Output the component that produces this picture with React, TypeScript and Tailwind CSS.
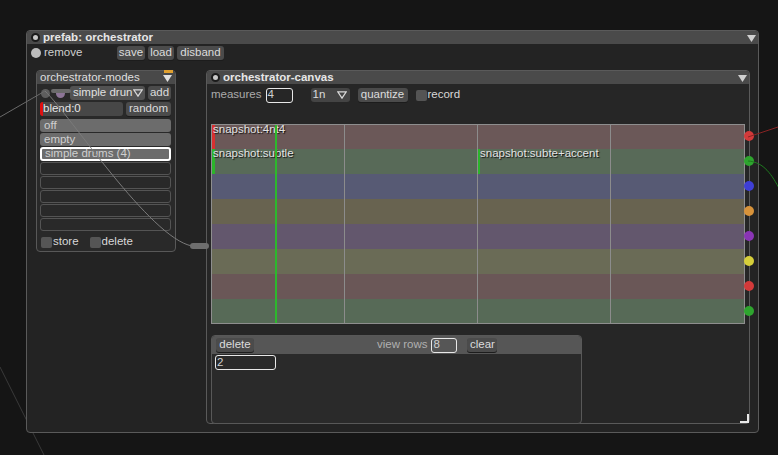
import React from "react";

const font = "font-['Liberation_Sans',Arial,sans-serif]";

function Btn({ label, className = "" }: { label: string; className?: string }) {
  return (
    <div
      className={`h-[14px] flex items-center justify-center rounded-[3px] bg-[#4b4b4b] text-[#dcdcdc] text-[11.5px] leading-none shadow-[0_1px_0_#1c1c1c] ${className}`}
    >
      {label}
    </div>
  );
}

function Tri({ fill = "#d0d0d0" }: { fill?: string }) {
  return (
    <svg width="9" height="7" viewBox="0 0 9 7">
      <polygon points="0,0 9,0 4.5,7" fill={fill} />
    </svg>
  );
}

function OpenTri() {
  return (
    <svg width="10" height="8" viewBox="0 0 10 8">
      <polygon points="0.8,0.8 9.2,0.8 5,7.2" fill="none" stroke="#d8d8d8" strokeWidth="1.2" />
    </svg>
  );
}

function Knob() {
  return <div className="w-[9px] h-[9px] rounded-full bg-[#c8c8c8] border-2 border-[#1b1b1b] shrink-0" />;
}

const rows = [
  { h: "h-[24px]", bg: "bg-[#6b5858]" },
  { h: "h-[25px]", bg: "bg-[#586a58]" },
  { h: "h-[25px]", bg: "bg-[#575a74]" },
  { h: "h-[25px]", bg: "bg-[#686350]" },
  { h: "h-[25px]", bg: "bg-[#63576d]" },
  { h: "h-[25px]", bg: "bg-[#6a6b56]" },
  { h: "h-[25px]", bg: "bg-[#6a5757]" },
  { h: "h-[24px]", bg: "bg-[#576a57]" },
];

const dots = ["bg-[#d23a3a]", "bg-[#2ea52e]", "bg-[#3f3fd6]", "bg-[#d8933a]", "bg-[#8a35b5]", "bg-[#d6cf3a]", "bg-[#d23a3a]", "bg-[#2ea52e]"];

const label = "absolute top-[-1px] text-[11.5px] leading-none text-[#e4e4e4] whitespace-nowrap [text-shadow:1px_1px_1px_#111]";

export default function App() {
  return (
    <div className={`relative w-[778px] h-[455px] overflow-hidden bg-[#151515] pt-[30px] pl-[26px] ${font}`}>
      {/* wire behind the prefab */}
      <svg className="absolute inset-0 pointer-events-none" width="778" height="455">
        <line x1="0" y1="367" x2="44" y2="455" stroke="#3a3a3a" strokeWidth="1" />
      </svg>

      <div className="relative w-[733px] h-[403px] rounded-[4px] border border-[#5a5a5a] bg-[#232323] flex flex-col">
        {/* prefab header */}
        <div className="h-[13px] bg-[#4a4a4a] rounded-t-[3px] flex items-center pl-[4px] pr-[2px] shrink-0">
          <Knob />
          <span className="ml-[3px] text-[11.5px] font-bold text-[#e6e6e6] leading-none">prefab: orchestrator</span>
          <div className="ml-auto mt-[1px]">
            <Tri />
          </div>
        </div>

        {/* remove row */}
        <div className="mt-[2px] h-[14px] flex items-center pl-[4px]">
          <div className="w-[10px] h-[10px] rounded-full bg-[#bdbdbd]" />
          <span className="ml-[3px] w-[73px] text-[11.5px] text-[#cfcfcf] leading-none">remove</span>
          <Btn label="save" className="w-[28px]" />
          <Btn label="load" className="ml-[3px] w-[26px]" />
          <Btn label="disband" className="ml-[3px] w-[47px]" />
        </div>

        <div className="mt-[10px] flex items-start pl-[9px]">
          {/* orchestrator-modes */}
          <div className="w-[140px] h-[182px] rounded-[4px] border border-[#585858] bg-[#292929] flex flex-col">
            <div className="relative h-[13px] bg-[#494949] rounded-t-[3px] flex items-center pl-[3px] pr-[3px] shrink-0">
              <span className="text-[11.5px] text-[#dedede] leading-none">orchestrator-modes</span>
              <div className="ml-auto mt-[2px]">
                <Tri fill="#e0e0e0" />
              </div>
              <div className="absolute right-[2px] top-[-1px] w-[9px] h-[3px] bg-[#e0a030]" />
            </div>
            <div className="mt-[2px] h-[14px] flex items-center pl-[4px]">
              <div className="w-[9px] h-[9px] rounded-full bg-[#5e5e5e]" />
              <div className="ml-[6px] w-[9px] h-[9px] rounded-full bg-[#8d7597]" />
              <div className="ml-[5px] w-[75px] h-[14px] rounded-[3px] bg-[#525252] flex items-center pl-[3px] pr-[2px] justify-between">
                <span className="text-[11.5px] text-[#e0e0e0] leading-none whitespace-nowrap">simple drun</span>
                <OpenTri />
              </div>
              <Btn label="add" className="ml-[3px] w-[23px]" />
            </div>
            <div className="mt-[2px] h-[14px] flex items-center pl-[3px]">
              <div className="w-[83px] h-[14px] rounded-[3px] bg-[#474747] flex items-center overflow-hidden">
                <div className="w-[3px] h-[14px] bg-[#e01010]" />
                <span className="text-[11.5px] text-[#e6e6e6] leading-none">blend:0</span>
              </div>
              <Btn label="random" className="ml-[3px] w-[45px]" />
            </div>
            <div className="mt-[3px] ml-[3px] w-[131px] flex flex-col gap-[1px]">
              <div className="h-[13px] rounded-[3px] bg-[#6c6c6c] flex items-center pl-[4px] text-[11.5px] text-[#cfcfcf] leading-none">off</div>
              <div className="h-[13px] rounded-[3px] bg-[#6c6c6c] flex items-center pl-[4px] text-[11.5px] text-[#cfcfcf] leading-none">empty</div>
              <div className="h-[14px] rounded-[3px] bg-[#6c6c6c] border-2 border-white flex items-center pl-[3px] text-[11.5px] text-[#cfcfcf] leading-none">simple drums (4)</div>
              <div className="h-[13px] rounded-[3px] border border-[#545454]" />
              <div className="h-[13px] rounded-[3px] border border-[#545454]" />
              <div className="h-[13px] rounded-[3px] border border-[#545454]" />
              <div className="h-[13px] rounded-[3px] border border-[#545454]" />
              <div className="h-[13px] rounded-[3px] border border-[#545454]" />
            </div>
            <div className="mt-[5px] h-[12px] flex items-center pl-[4px]">
              <div className="w-[11px] h-[11px] rounded-[2px] bg-[#555]" />
              <span className="ml-[1px] text-[11.5px] text-[#d8d8d8] leading-none">store</span>
              <div className="ml-[11px] w-[11px] h-[11px] rounded-[2px] bg-[#555]" />
              <span className="ml-[1px] text-[11.5px] text-[#d8d8d8] leading-none">delete</span>
            </div>
          </div>

          {/* orchestrator-canvas */}
          <div className="relative ml-[30px] w-[544px] h-[354px] rounded-[4px] border border-[#5a5a5a] bg-[#262626] flex flex-col">
            <div className="h-[13px] bg-[#4a4a4a] rounded-t-[3px] flex items-center pl-[4px] pr-[2px] shrink-0">
              <Knob />
              <span className="ml-[3px] text-[11.5px] font-bold text-[#e6e6e6] leading-none">orchestrator-canvas</span>
              <div className="ml-auto mt-[1px]">
                <Tri />
              </div>
            </div>

            <div className="mt-[4px] h-[14px] flex items-center pl-[4px]">
              <span className="text-[11.5px] text-[#ababab] leading-none">measures</span>
              <div className="ml-[4px] w-[27px] h-[15px] rounded-[3px] border-[1.5px] border-[#e8e8e8] flex items-center pl-[1px] text-[11.5px] text-[#cfcfcf] leading-none">4</div>
              <div className="ml-[18px] w-[39px] h-[14px] rounded-[3px] bg-[#444] flex items-center pl-[2px] pr-[3px] justify-between">
                <span className="text-[11.5px] text-[#dcdcdc] leading-none">1n</span>
                <OpenTri />
              </div>
              <Btn label="quantize" className="ml-[8px] w-[50px]" />
              <div className="ml-[8px] w-[11px] h-[11px] rounded-[2px] bg-[#545454]" />
              <span className="ml-[1px] text-[11.5px] text-[#d8d8d8] leading-none">record</span>
            </div>

            {/* grid */}
            <div className="relative mt-[22px] ml-[4px] w-[534px] border border-[#8e8e8e]">
              {rows.map((r, i) => (
                <div key={i} className={`relative ${r.h} ${r.bg}`}>
                  {i === 0 && (
                    <>
                      <div className="absolute left-0 top-0 w-[3px] h-full bg-[#d83030]" />
                      <span className={`${label} left-[1px]`}>snapshot:4nt4</span>
                    </>
                  )}
                  {i === 1 && (
                    <>
                      <div className="absolute left-0 top-0 w-[3px] h-full bg-[#2bb52b]" />
                      <span className={`${label} left-[1px]`}>snapshot:subtle</span>
                      <div className="absolute left-[265px] top-0 w-[3px] h-full bg-[#2bb52b]" />
                      <span className={`${label} left-[268px]`}>snapshot:subte+accent</span>
                    </>
                  )}
                </div>
              ))}
              <div className="absolute left-[132px] top-0 bottom-0 w-px bg-[#8c8c8c]" />
              <div className="absolute left-[265px] top-0 bottom-0 w-px bg-[#8c8c8c]" />
              <div className="absolute left-[398px] top-0 bottom-0 w-px bg-[#8c8c8c]" />
              <div className="absolute left-[63px] top-0 bottom-0 w-[2px] bg-[#2cb82c]" />
              <div className="absolute right-[-10px] top-[6px] flex flex-col gap-[15px]">
                {dots.map((d, i) => (
                  <div key={i} className={`w-[10px] h-[10px] rounded-full ${d}`} />
                ))}
              </div>
            </div>

            {/* rows editor */}
            <div className="mt-[11px] ml-[4px] w-[371px] flex-1 mb-[-1px] rounded-[4px] border border-[#585858] bg-[#2a2a2a] flex flex-col">
              <div className="h-[18px] bg-[#565656] rounded-t-[3px] flex items-center pl-[4px] shrink-0">
                <Btn label="delete" className="w-[38px] bg-[#4a4a4a]" />
                <span className="ml-[123px] text-[11.5px] text-[#b0b0b0] leading-none">view rows</span>
                <div className="ml-[4px] w-[26px] h-[15px] rounded-[3px] border-[1.5px] border-[#e8e8e8] flex items-center pl-[1px] text-[11.5px] text-[#cfcfcf] leading-none">8</div>
                <Btn label="clear" className="ml-[10px] w-[30px] bg-[#4a4a4a]" />
              </div>
              <div className="mt-[1px] ml-[3px] w-[61px] h-[15px] rounded-[3px] border-[1.5px] border-[#e8e8e8] flex items-center pl-[1px] text-[11.5px] text-[#cfcfcf] leading-none">2</div>
            </div>

            {/* resize handle */}
            <div className="absolute right-0 bottom-0 w-[9px] h-[9px] border-r-2 border-b-2 border-[#e8e8e8]" />
          </div>
        </div>
      </div>

      {/* patch cords */}
      <svg className="absolute inset-0 pointer-events-none" width="778" height="455">
        <line x1="0" y1="117" x2="45" y2="91" stroke="#6a6a6a" strokeWidth="1" />
        <path d="M45 91 C 70 115, 150 238, 192 246" fill="none" stroke="#7a7a7a" strokeWidth="1" />
        <rect x="190" y="243" width="19" height="6" rx="3" fill="#6e6e6e" />
        <line x1="53" y1="91" x2="69" y2="91" stroke="#6a6a6a" strokeWidth="4" strokeLinecap="round" />
        <line x1="748" y1="137" x2="778" y2="127" stroke="#8a2424" strokeWidth="1" />
        <path d="M748 161 C 764 162, 772 175, 780 190" fill="none" stroke="#1f7a1f" strokeWidth="1" />
      </svg>
    </div>
  );
}
